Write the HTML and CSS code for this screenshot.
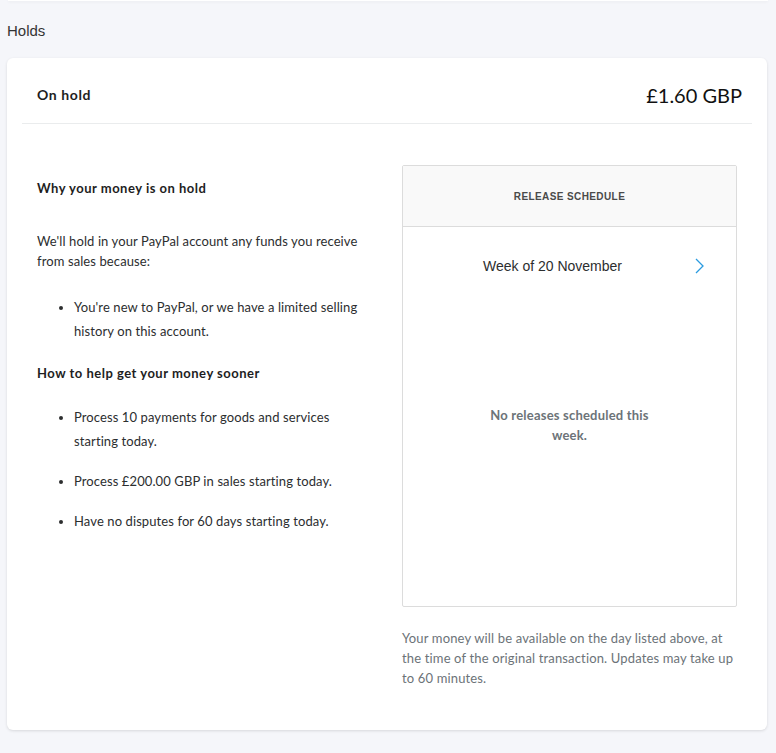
FILE: index.html
```html
<!DOCTYPE html>
<html lang="en">
<head>
<meta charset="UTF-8">
<meta name="viewport" content="width=device-width, initial-scale=1.0">
<title>Holds</title>
<link rel="stylesheet" href="styles.css">
</head>
<body>
<div class="top-bar"></div>
<div class="page">
    <h1 class="page-title">Holds</h1>

    <div class="card">
        <div class="card-header">
            <h2>On hold</h2>
            <div class="amount">£1.60 GBP</div>
        </div>

        <div class="card-body">
            <div class="reasons">
                <h3>Why your money is on hold</h3>
                <p>We'll hold in your PayPal account any funds you receive from sales because:</p>
                <ul>
                    <li>You're new to PayPal, or we have a limited selling history on this account.</li>
                </ul>

                <h3 class="next">How to help get your money sooner</h3>
                <ul>
                    <li>Process 10 payments for goods and services starting today.</li>
                    <li>Process £200.00 GBP in sales starting today.</li>
                    <li>Have no disputes for 60 days starting today.</li>
                </ul>
            </div>

            <div class="schedule-col">
                <div class="schedule">
                    <div class="schedule-head">Release schedule</div>
                    <div class="week-row">
                        <span class="week-label">Week of 20 November</span>
                        <button class="week-next" aria-label="Next week">
                            <svg width="9" height="16" viewBox="0 0 9 16"><path d="M1 1l7 7-7 7" fill="none" stroke="#2a9be0" stroke-width="1.3"/></svg>
                        </button>
                    </div>
                    <div class="empty">No releases scheduled this week.</div>
                </div>
                <p class="note">Your money will be available on the day listed above, at the time of the original transaction. Updates may take up to 60 minutes.</p>
            </div>
        </div>
    </div>
</div>
</body>
</html>
```

FILE: styles.css
```css
* {
    box-sizing: border-box;
    margin: 0;
    padding: 0;
}

body {
    background: #f5f6fa;
    font-family: Lato, "Open Sans", sans-serif;
    color: #2c2e2f;
    min-height: 100vh;
}

.top-bar {
    height: 1px;
    margin: 0 8px;
    background: #fff;
    box-shadow: 0 1px 3px rgba(0, 0, 0, 0.08);
}

.page {
    padding: 0 9px 0 7px;
}

.page-title {
    font-family: "Liberation Sans", Arial, sans-serif;
    font-weight: normal;
    font-size: 15px;
    line-height: 20px;
    color: #333;
    padding: 20px 0 0;
    height: 57px;
}

.card {
    background: #fff;
    border-radius: 6px;
    box-shadow: 0 1px 3px rgba(0, 0, 0, 0.12);
    padding: 0 15px 42px;
}

.card-header {
    display: flex;
    align-items: center;
    justify-content: space-between;
    height: 66px;
    padding: 8px 10px 0 15px;
    border-bottom: 1px solid #eaeced;
}

.card-header h2 {
    font-size: 14px;
    font-weight: bold;
    letter-spacing: 0.6px;
    color: #1e1e1e;
}

.amount {
    font-size: 20px;
    color: #111;
}

.card-body {
    display: grid;
    grid-template-columns: 1fr 335px;
    gap: 30px;
    padding: 41px 15px 0;
}

.reasons {
    padding-top: 13px;
    font-size: 13px;
    letter-spacing: 0.1px;
}

.reasons h3 {
    font-size: 13px;
    font-weight: bold;
    letter-spacing: 0.5px;
    line-height: 20px;
    margin-bottom: 33px;
    color: #1e1e1e;
}

.reasons h3.next {
    margin-bottom: 22px;
}

.reasons p {
    line-height: 20px;
    margin-bottom: 24px;
}

.reasons ul {
    padding-left: 37px;
    margin-bottom: 20px;
}

.reasons li {
    line-height: 24px;
    margin-bottom: 16px;
}

.schedule {
    border: 1px solid #dcdcdc;
    border-radius: 2px;
    height: 442px;
}

.schedule-head {
    height: 61px;
    background: #f9f9f9;
    border-bottom: 1px solid #dcdcdc;
    display: flex;
    align-items: center;
    justify-content: center;
    font-family: "Liberation Sans", Arial, sans-serif;
    font-size: 10px;
    font-weight: bold;
    letter-spacing: 0.4px;
    text-transform: uppercase;
    color: #4a4a4a;
}

.week-row {
    display: flex;
    align-items: center;
    padding: 29px 32px 0 28px;
}

.week-label {
    flex: 1;
    text-align: center;
    font-family: "Liberation Sans", Arial, sans-serif;
    font-size: 14px;
    line-height: 20px;
    color: #2c2e2f;
}

.week-next {
    width: 30px;
    border: none;
    background: none;
    display: flex;
    justify-content: flex-end;
    cursor: pointer;
}

.empty {
    margin: 129px auto 0;
    max-width: 172px;
    text-align: center;
    font-size: 13px;
    font-weight: bold;
    letter-spacing: 0.2px;
    line-height: 20px;
    color: #6c7378;
}

.note {
    margin-top: 21px;
    font-size: 13px;
    letter-spacing: 0.15px;
    line-height: 20px;
    color: #6c7378;
}
```
